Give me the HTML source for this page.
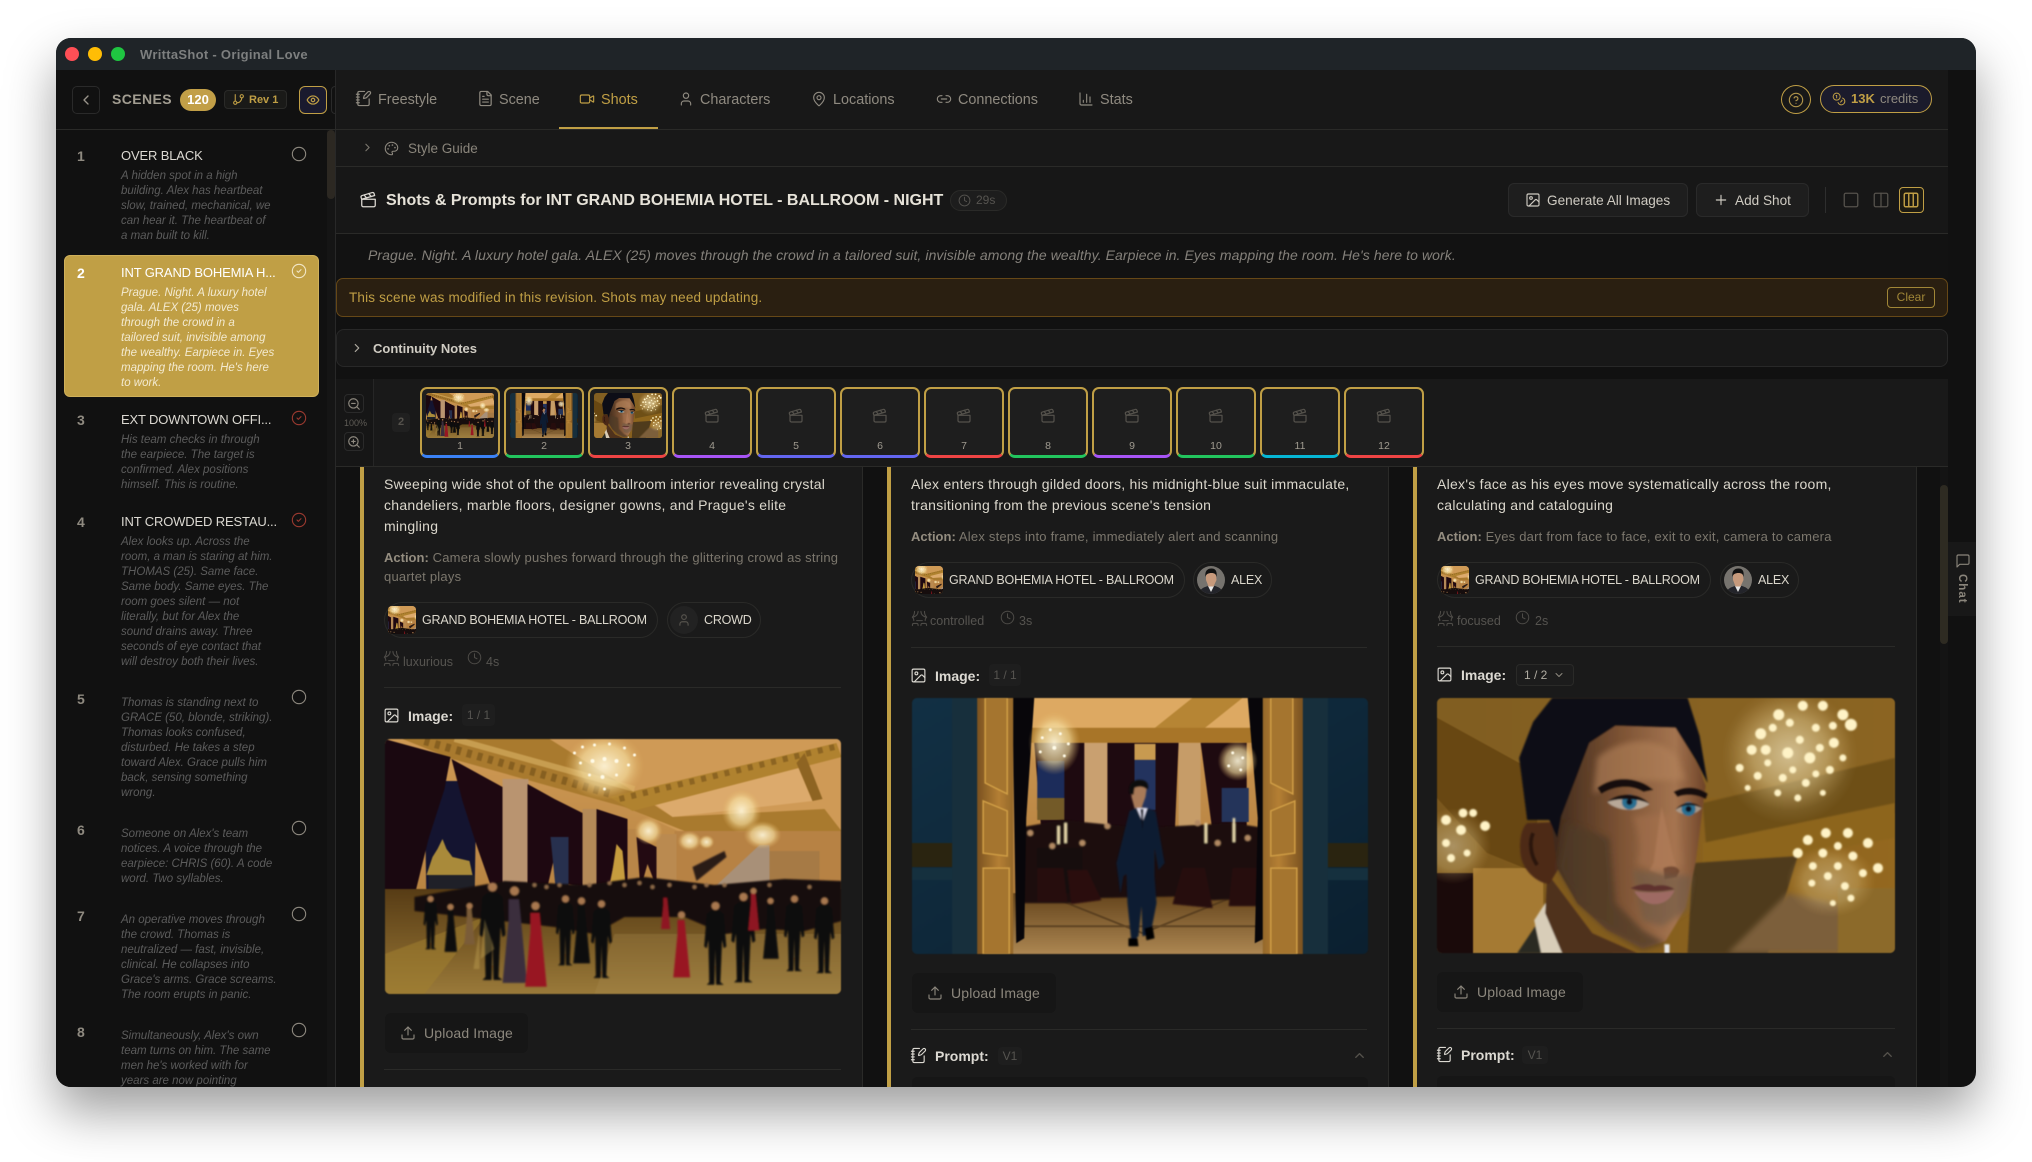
<!DOCTYPE html>
<html lang="en"><head><meta charset="utf-8"><title>WrittaShot - Original Love</title>
<style>
html,body{margin:0;padding:0;width:2032px;height:1162px;background:#fff;overflow:hidden;font-family:"Liberation Sans",Arial,sans-serif}
#win{position:absolute;left:56px;top:38px;width:1920px;height:1049px;border-radius:15px;overflow:hidden;background:#111;box-shadow:0 25px 50px 0 rgba(0,0,0,.38)}
#in{position:absolute;left:-56px;top:-38px;width:2032px;height:1162px}
.b{position:absolute;box-sizing:border-box}
.t{position:absolute;white-space:nowrap}
svg.i{position:absolute;fill:none;stroke:currentColor;stroke-width:2;stroke-linecap:round;stroke-linejoin:round;overflow:visible}
svg.p{position:absolute;display:block}
.tab{font-size:14.4px;line-height:20px;top:90px;color:#8f8a80}
.n{font-size:14px;font-weight:700;line-height:18px;color:#8f8a80;left:77px}
.h{font-size:13px;font-weight:400;line-height:18px;color:#dcd9d2;left:121px;letter-spacing:-.15px;margin-top:1px}
.d{font-size:11.5px;font-style:italic;line-height:15px;color:#5c5c5c;left:121px;margin-top:1px}
.de{font-size:14px;line-height:21px;color:#dbd7cc;letter-spacing:.27px}
.ac{font-size:13px;line-height:19px;color:#7c776d;letter-spacing:.22px}
.ac b{color:#948d80;letter-spacing:0}
.chip{border:1px solid #2a2a28;border-radius:18px;height:36px;background:#1a1a1a}
.ct{font-size:12.5px;line-height:16px;color:#dbd7cc;font-weight:400;letter-spacing:-.2px}
.m{font-size:12.5px;line-height:16px;color:#565450}
.lb{font-size:14px;font-weight:700;line-height:18px;color:#dcd9d2}
.bg{background:#1e1e1e;border-radius:4px;color:#565450;font-size:12px;line-height:22px;text-align:center}
.up{background:#161616;border-radius:6px;height:40px}
.ut{font-size:14px;line-height:18px;color:#8c877d;letter-spacing:.15px}
.hr{height:1px;background:#2a2a28}
.card{left:0;top:387px;width:80px;height:71px;border:2px solid #c09f45;border-bottom-width:3px;border-radius:7px;background:#1e1e1e}
.cn{font-size:10.5px;line-height:12px;color:#a09b90;font-weight:400;text-align:center;width:80px;top:440px}
.btn{background:#1e1e1e;border:1px solid #2a2a2a;border-radius:6px}
.bt{font-size:13.6px;line-height:18px;color:#cfcbc2}
.gold{color:#c09f45}
.ph{filter:blur(.45px)}
</style></head><body>
<svg width="0" height="0" style="position:absolute">
<defs>
<linearGradient id="gFloor" x1="0" y1="0" x2="0" y2="1"><stop offset="0" stop-color="#573c15"/><stop offset=".6" stop-color="#7f6029"/><stop offset="1" stop-color="#9a7a3a"/></linearGradient>
<linearGradient id="gWall" x1="0" y1="0" x2="0" y2="1"><stop offset="0" stop-color="#cf9a55"/><stop offset="1" stop-color="#a97535"/></linearGradient>
<linearGradient id="gDoor" x1="0" y1="0" x2="1" y2="0"><stop offset="0" stop-color="#7a5220"/><stop offset=".6" stop-color="#b47f34"/><stop offset="1" stop-color="#94682a"/></linearGradient>
<linearGradient id="gBlue" x1="0" y1="0" x2="1" y2="1"><stop offset="0" stop-color="#123044"/><stop offset="1" stop-color="#0b2030"/></linearGradient>
<linearGradient id="gFloorB" x1="0" y1="0" x2="0" y2="1"><stop offset="0" stop-color="#63431b"/><stop offset="1" stop-color="#ad8752"/></linearGradient>
<linearGradient id="gFace" x1="0" y1="0" x2="1" y2="0"><stop offset="0" stop-color="#3f2a1c"/><stop offset=".45" stop-color="#7d5334"/><stop offset=".8" stop-color="#a47450"/><stop offset="1" stop-color="#6e4327"/></linearGradient>
<linearGradient id="gBgC" x1="0" y1="0" x2="1" y2="0"><stop offset="0" stop-color="#7a571d"/><stop offset="1" stop-color="#94681f"/></linearGradient>
<radialGradient id="gl"><stop offset="0" stop-color="#fff8dc" stop-opacity=".9"/><stop offset=".6" stop-color="#f6dfa0" stop-opacity=".65"/><stop offset="1" stop-color="#e0b060" stop-opacity="0"/></radialGradient>
<radialGradient id="gs"><stop offset="0" stop-color="#fff4c8" stop-opacity=".4"/><stop offset="1" stop-color="#fff4c8" stop-opacity="0"/></radialGradient>
<filter id="b1" x="-10%" y="-10%" width="120%" height="120%"><feGaussianBlur stdDeviation=".8"/></filter>
<filter id="b2" x="-30%" y="-30%" width="160%" height="160%"><feGaussianBlur stdDeviation="3"/></filter>
<path id="pm" d="M10 8h10l5 4 3 38-3 2-2-10-2 50 4 3h-9l-1-42-1 42h-9l3-3L7 42 5 52l-3-2 3-38Z"/>
<path id="pd" d="M10 10h10l2 20 6 62H4l6-62Z"/>
</defs>

<symbol id="ic-back" viewBox="0 0 24 24"><path d="M15 18l-6-6 6-6"/></symbol>
<symbol id="ic-right" viewBox="0 0 24 24"><path d="m9 18 6-6-6-6"/></symbol>
<symbol id="ic-up" viewBox="0 0 24 24"><path d="m18 15-6-6-6 6"/></symbol>
<symbol id="ic-down" viewBox="0 0 24 24"><path d="m6 9 6 6 6-6"/></symbol>
<symbol id="ic-eye" viewBox="0 0 24 24"><path d="M2 12s3-7 10-7 10 7 10 7-3 7-10 7-10-7-10-7Z"/><circle cx="12" cy="12" r="3"/></symbol>
<symbol id="ic-branch" viewBox="0 0 24 24"><path d="M6 3v12"/><circle cx="18" cy="6" r="3"/><circle cx="6" cy="18" r="3"/><path d="M18 9a9 9 0 0 1-9 9"/></symbol>
<symbol id="ic-note" viewBox="0 0 24 24"><path d="M13.4 2H6a2 2 0 0 0-2 2v16a2 2 0 0 0 2 2h12a2 2 0 0 0 2-2v-7.4"/><path d="M2 6h4M2 10h4M2 14h4M2 18h4"/><path d="M21.378 5.626a1 1 0 1 0-3.004-3.004l-5.01 5.012a2 2 0 0 0-.506.854l-.837 2.87a.5.5 0 0 0 .62.62l2.87-.837a2 2 0 0 0 .854-.506z"/></symbol>
<symbol id="ic-file" viewBox="0 0 24 24"><path d="M15 2H6a2 2 0 0 0-2 2v16a2 2 0 0 0 2 2h12a2 2 0 0 0 2-2V7Z"/><path d="M14 2v4a2 2 0 0 0 2 2h4"/><path d="M10 9H8M16 13H8M16 17H8"/></symbol>
<symbol id="ic-video" viewBox="0 0 24 24"><path d="m16 13 5.223 3.482a.5.5 0 0 0 .777-.416V7.870a.5.5 0 0 0-.752-.432L16 10.500"/><rect x="2" y="6" width="14" height="12" rx="2"/></symbol>
<symbol id="ic-user" viewBox="0 0 24 24"><path d="M19 21v-2a4 4 0 0 0-4-4H9a4 4 0 0 0-4 4v2"/><circle cx="12" cy="7" r="4"/></symbol>
<symbol id="ic-pin" viewBox="0 0 24 24"><path d="M20 10c0 4.993-5.539 10.193-7.399 11.799a1 1 0 0 1-1.202 0C9.539 20.193 4 14.993 4 10a8 8 0 0 1 16 0"/><circle cx="12" cy="10" r="3"/></symbol>
<symbol id="ic-link" viewBox="0 0 24 24"><path d="M9 17H7A5 5 0 0 1 7 7h2"/><path d="M15 7h2a5 5 0 1 1 0 10h-2"/><path d="M8 12h8"/></symbol>
<symbol id="ic-chart" viewBox="0 0 24 24"><path d="M3 3v16a2 2 0 0 0 2 2h16"/><path d="M18 17V9M13 17V5M8 17v-3"/></symbol>
<symbol id="ic-help" viewBox="0 0 24 24"><circle cx="12" cy="12" r="10"/><path d="M9.090 9a3 3 0 0 1 5.830 1c0 2-3 3-3 3"/><path d="M12 17h.01"/></symbol>
<symbol id="ic-coins" viewBox="0 0 24 24"><circle cx="8" cy="8" r="6"/><path d="M18.090 10.370A6 6 0 1 1 10.340 18"/><path d="M7 6h1v4"/><path d="m16.710 13.880.7.710-2.820 2.820"/></symbol>
<symbol id="ic-palette" viewBox="0 0 24 24"><circle cx="13.5" cy="6.5" r=".5"/><circle cx="17.5" cy="10.5" r=".5"/><circle cx="8.5" cy="7.5" r=".5"/><circle cx="6.5" cy="12.5" r=".5"/><path d="M12 2C6.5 2 2 6.5 2 12s4.500 10 10 10c.926 0 1.648-.746 1.648-1.688 0-.437-.18-.835-.437-1.125-.29-.289-.438-.652-.438-1.125a1.640 1.640 0 0 1 1.668-1.668h1.996c3.051 0 5.555-2.503 5.555-5.554C21.965 6.012 17.461 2 12 2z"/></symbol>
<symbol id="ic-clap" viewBox="0 0 24 24"><path d="M20.2 6 3 11l-.9-2.4c-.3-1.1.3-2.2 1.3-2.5l13.5-4c1.1-.3 2.2.3 2.5 1.3Z"/><path d="m6.200 5.300 3.100 3.900"/><path d="m12.400 3.400 3.100 4"/><path d="M3 11h18v8a2 2 0 0 1-2 2H5a2 2 0 0 1-2-2Z"/></symbol>
<symbol id="ic-clock" viewBox="0 0 24 24"><circle cx="12" cy="12" r="10"/><path d="M12 6v6l4 2"/></symbol>
<symbol id="ic-image" viewBox="0 0 24 24"><rect x="3" y="3" width="18" height="18" rx="2"/><circle cx="9" cy="9" r="2"/><path d="m21 15-3.086-3.086a2 2 0 0 0-2.828 0L6 21"/></symbol>
<symbol id="ic-plus" viewBox="0 0 24 24"><path d="M5 12h14M12 5v14"/></symbol>
<symbol id="ic-mood" viewBox="0 0 24 24"><path d="M2 10s3-3 3-8"/><path d="M22 10s-3-3-3-8"/><path d="M10 2c0 4.400-3.600 8-8 8"/><path d="M14 2c0 4.400 3.600 8 8 8"/><path d="M2 10s2 2 2 5"/><path d="M22 10s-2 2-2 5"/><path d="M8 15h8"/><path d="M2 22v-1a2 2 0 0 1 2-2h4a2 2 0 0 1 2 2v1"/><path d="M14 22v-1a2 2 0 0 1 2-2h4a2 2 0 0 1 2 2v1"/></symbol>
<symbol id="ic-upload" viewBox="0 0 24 24"><path d="M21 15v4a2 2 0 0 1-2 2H5a2 2 0 0 1-2-2v-4"/><path d="M17 8l-5-5-5 5"/><path d="M12 3v12"/></symbol>
<symbol id="ic-circle" viewBox="0 0 24 24"><circle cx="12" cy="12" r="10"/></symbol>
<symbol id="ic-check" viewBox="0 0 24 24"><circle cx="12" cy="12" r="10"/><path d="m9 12 2 2 4-4"/></symbol>
<symbol id="ic-msg" viewBox="0 0 24 24"><path d="M21 15a2 2 0 0 1-2 2H7l-4 4V5a2 2 0 0 1 2-2h14a2 2 0 0 1 2 2z"/></symbol>
<symbol id="ic-sq" viewBox="0 0 24 24"><rect x="3" y="3" width="18" height="18" rx="2"/></symbol>
<symbol id="ic-c2" viewBox="0 0 24 24"><rect x="3" y="3" width="18" height="18" rx="2"/><path d="M12 3v18"/></symbol>
<symbol id="ic-c3" viewBox="0 0 24 24"><rect x="3" y="3" width="18" height="18" rx="2"/><path d="M9 3v18M15 3v18"/></symbol>
<symbol id="ic-zo" viewBox="0 0 24 24"><circle cx="11" cy="11" r="8"/><path d="m21 21-4.300-4.300"/><path d="M8 11h6"/></symbol>
<symbol id="ic-zi" viewBox="0 0 24 24"><circle cx="11" cy="11" r="8"/><path d="m21 21-4.300-4.300"/><path d="M11 8v6M8 11h6"/></symbol>

<!-- Ballroom -->
<symbol id="sA" viewBox="0 0 457 255" preserveAspectRatio="xMidYMid slice">
<rect width="457" height="255" fill="url(#gWall)"/>
<path d="M165 0H457V95H300L225 60Z" fill="#cf9a56"/>
<path d="M265 61 412 24 428 62 288 78Z" fill="#dcaa6c"/>
<path d="M18 0H165L245 50 288 78 440 70 457 92H300L240 68 68 20Z" fill="#a97a2e"/>
<path d="M225 58 452 4 457 18 248 72Z" fill="#b0822f"/>
<path d="M40 2 230 56" stroke="#6f4d18" stroke-width="8" stroke-dasharray="5 6" opacity=".6" fill="none"/>
<path d="M235 60 450 8" stroke="#6f4d18" stroke-width="6" stroke-dasharray="5 7" opacity=".55" fill="none"/>
<path d="M70 0 250 50" stroke="#dcb468" stroke-width="6" opacity=".6" fill="none"/>
<path d="M412 24 428 62 438 60 420 14Z" fill="#8e6422"/>
<rect y="92" x="290" width="167" height="60" fill="#b78244"/>
<path d="M328 150 375 106 385 106V150Z" fill="#a89078"/>
<rect x="385" y="112" width="50" height="40" fill="#a67a45"/>
<rect x="118" y="40" width="26" height="110" fill="#b99470"/>
<rect x="198" y="70" width="14" height="85" fill="#b48a58"/>
<rect x="243" y="90" width="10" height="65" fill="#b98648"/>
<rect x="272" y="95" width="20" height="60" fill="#ba8a50"/>
<path d="M40 42H92L90 165H42Z" fill="#141430"/>
<path d="M48 118 53 110 58 100 62 110 68 118 85 122 88 136H42Z" fill="#a98a3a"/>
<path d="M44 136H90V165H44Z" fill="#1f2028"/>
<path d="M0 0 66 18 60 50 44 100 28 165 20 205 0 208Z" fill="#1a0810"/>
<path d="M67 20 118 48 118 152 106 146 92 106 78 62Z" fill="#1e0811"/>
<path d="M143 45 170 60 198 74 198 148 184 145 174 100 162 152 143 148Z" fill="#1e0811"/>
<path d="M166 98H184V148H171Z" fill="#27304e"/>
<path d="M212 70 243 80 243 150 232 112 224 150 212 148Z" fill="#1e0811"/>
<path d="M252 98 272 108 272 148 263 125 256 150Z" fill="#230a12"/>
<path d="M232 105 238 112 241 145H226Z" fill="#c69c3e"/>
<rect x="0" y="150" width="457" height="105" fill="url(#gFloor)"/>
<path d="M0 215 100 178 40 255H0Z" fill="#a07f30" opacity=".55"/>
<path d="M230 195H457V255H210Z" fill="#a88a50" opacity=".3"/>
<g filter="url(#b1)">
<path d="M30 158 120 142 200 146 260 138 330 146 400 140 457 142V182L420 192 380 190 340 195 300 178 240 178 210 195 170 188 30 172Z" fill="#140b08"/>
<g fill="#0c0a0a">
<use href="#pm" transform="translate(38 158) scale(.55)"/>
<use href="#pd" transform="translate(58 165) scale(.52)"/>
<use href="#pm" transform="translate(93 146) scale(1)"/>
<use href="#pm" transform="translate(170 158) scale(.72)"/>
<use href="#pd" transform="translate(186 160) scale(.7)"/>
<use href="#pm" transform="translate(205 163) scale(.8)"/>
<use href="#pm" transform="translate(318 165) scale(.85)"/>
<use href="#pm" transform="translate(345 156) scale(.92)"/>
<use href="#pd" transform="translate(376 160) scale(.65)"/>
<use href="#pm" transform="translate(398 158) scale(.78)"/>
<use href="#pm" transform="translate(428 160) scale(.78)"/>
</g>
<use href="#pd" fill="#7a5c38" transform="translate(78 165) scale(.44)"/>
<use href="#pd" fill="#3a2e3c" transform="translate(114 150) scale(1.02)"/>
<use href="#pd" fill="#981422" transform="translate(137 165) scale(.9)"/>
<use href="#pd" fill="#981422" transform="translate(286 174) scale(.7)"/>
<use href="#pd" fill="#8e1520" transform="translate(362 150) scale(.45)"/>
<use href="#pd" fill="#8e1520" transform="translate(275 155) scale(.38)"/>
<g fill="#a87850">
<circle cx="46" cy="160" r="3"/><circle cx="66" cy="168" r="3"/><circle cx="85" cy="167" r="3"/><circle cx="108" cy="148" r="4.500"/><circle cx="130" cy="152" r="4.500"/><circle cx="151" cy="167" r="4"/><circle cx="181" cy="160" r="3.500"/><circle cx="197" cy="162" r="3.500"/><circle cx="217" cy="165" r="3.500"/><circle cx="297" cy="176" r="3.500"/><circle cx="331" cy="167" r="4"/><circle cx="359" cy="158" r="4"/><circle cx="369" cy="152" r="3"/><circle cx="386" cy="162" r="3"/><circle cx="410" cy="160" r="3.500"/><circle cx="440" cy="162" r="3.500"/>
</g>
<g fill="#8e6a48"><circle cx="150" cy="146" r="2"/><circle cx="162" cy="148" r="2"/><circle cx="175" cy="146" r="2"/><circle cx="205" cy="146" r="2"/><circle cx="225" cy="144" r="2"/><circle cx="240" cy="146" r="2"/><circle cx="255" cy="144" r="2"/><circle cx="268" cy="148" r="2"/><circle cx="285" cy="146" r="2"/><circle cx="310" cy="148" r="2"/><circle cx="322" cy="146" r="2"/><circle cx="340" cy="146" r="2"/><circle cx="385" cy="146" r="2"/><circle cx="425" cy="148" r="2"/></g>
<path d="M308 128 340 112 342 118 312 142Z" fill="#2a1a14"/>
</g>
<ellipse cx="220" cy="27" rx="40" ry="34" fill="url(#gl)"/>
<g fill="#fffbe8">
<circle cx="190" cy="14" r="1.500"/><circle cx="198" cy="8" r="1.500"/><circle cx="210" cy="6" r="1.500"/><circle cx="225" cy="5" r="1.500"/><circle cx="240" cy="9" r="1.500"/><circle cx="250" cy="16" r="1.500"/><circle cx="196" cy="24" r="1.500"/><circle cx="208" cy="22" r="2"/><circle cx="220" cy="20" r="2"/><circle cx="232" cy="22" r="2"/><circle cx="244" cy="26" r="1.500"/><circle cx="205" cy="36" r="1.500"/><circle cx="218" cy="38" r="2"/><circle cx="232" cy="36" r="1.500"/><circle cx="220" cy="50" r="1.500"/></g>
<ellipse cx="264" cy="92" rx="14" ry="14" fill="url(#gl)"/>
<ellipse cx="357" cy="72" rx="20" ry="22" fill="url(#gl)"/>
<ellipse cx="378" cy="96" rx="19" ry="14" fill="url(#gl)"/>
<ellipse cx="305" cy="102" rx="12" ry="10" fill="url(#gl)"/>
<ellipse cx="322" cy="103" rx="8" ry="7" fill="url(#gl)"/>
<path d="M100 180l10 30-14 10ZM95 190l-6 40h6Z" fill="#d8ba62" opacity=".3" filter="url(#b1)"/>
</symbol>

<!-- Doors -->
<symbol id="sB" viewBox="0 0 455 256" preserveAspectRatio="xMidYMid slice">
<rect width="455" height="256" fill="url(#gBlue)"/>
<rect x="0" y="145" width="50" height="24" fill="#2a2410"/>
<rect x="405" y="145" width="50" height="24" fill="#2a2410"/>
<rect x="0" y="170" width="50" height="12" fill="#15303e"/>
<rect x="405" y="170" width="50" height="12" fill="#15303e"/>
<rect x="40" y="0" width="25" height="256" fill="#172f3c"/>
<rect x="390" y="0" width="25" height="256" fill="#172f3c"/>
<rect x="100" y="0" width="255" height="256" fill="url(#gWall)"/>
<rect x="100" y="0" width="255" height="32" fill="#dda962"/>
<path d="M240 32 280 0H330L290 32Z" fill="#b68534"/>
<rect x="100" y="30" width="255" height="15" fill="#a87528"/>
<path d="M122 45H172L172 135 150 145H130Z" fill="#1e0a10"/>
<path d="M125 63h27v49h-27Z" fill="#1c2c5a"/>
<path d="M125 100h27v22h-27Z" fill="#735a28"/>
<rect x="172" y="45" width="23" height="100" fill="#c9a070"/>
<rect x="266" y="45" width="22" height="100" fill="#c69c68"/>
<path d="M195 45H266L262 140 195 140Z" fill="#1e0a10"/>
<rect x="222" y="62" width="21" height="50" fill="#23335e"/>
<path d="M222 46h21v16h-21Z" fill="#c89a50"/>
<path d="M288 45H334L334 128 300 135Z" fill="#1e0a10"/>
<rect x="309" y="90" width="27" height="34" fill="#24345a"/>
<rect x="100" y="195" width="255" height="61" fill="url(#gFloorB)"/>
<path d="M108 228 350 228M130 195 230 235M330 195 230 235" stroke="#4e361a" stroke-width="2" opacity=".7"/>
<g filter="url(#b1)">
<path d="M105 130 150 122 230 130 320 125 352 130 350 200 300 202 280 198 180 200 160 205 105 205Z" fill="#1a0e0a"/>
<path d="M125 150h45v45h-45Z" fill="#160a0a"/>
<path d="M155 172h20l14 30-30 4Z" fill="#2c0f10"/>
<path d="M125 170h26l4 34h-30Z" fill="#260d10"/>
<path d="M270 170h22l8 40-40-4Z" fill="#260d10"/>
<path d="M320 170h30l-2 38h-32Z" fill="#260d10"/>
<g fill="#b38a64"><circle cx="118" cy="135" r="3"/><circle cx="140" cy="148" r="3"/><circle cx="170" cy="145" r="3"/><circle cx="195" cy="128" r="3"/><circle cx="285" cy="125" r="3"/><circle cx="305" cy="145" r="3"/><circle cx="335" cy="140" r="3"/></g>
<rect x="145" y="128" width="2.500" height="18" fill="#f0e0b0"/><rect x="152" y="125" width="2.500" height="20" fill="#f0e0b0"/><rect x="292" y="125" width="2.500" height="20" fill="#f0e0b0"/><rect x="320" y="120" width="2.500" height="24" fill="#f0e0b0"/>
</g>
<path d="M100 0H122L114 120 112 240 104 245 102 120Z" fill="#08060a"/>
<path d="M335 0H352L352 240 342 245 345 120Z" fill="#08060a"/>
<rect x="65" y="0" width="36" height="256" fill="url(#gDoor)"/>
<rect x="350" y="0" width="40" height="256" fill="url(#gDoor)" transform="matrix(-1 0 0 1 740 0)"/>
<path d="M73 0H95V96L73 85ZM71 103 95 113V158L71 155ZM71 170 97 170V256H71Z" fill="#a5752f" stroke="#cf9d45" stroke-width="1.500"/>
<path d="M358 85 380 96V0H358ZM358 113 382 103V155L358 158ZM358 170H384V256H358Z" fill="#a5752f" stroke="#cf9d45" stroke-width="1.500"/>
<ellipse cx="142" cy="45" rx="26" ry="32" fill="url(#gl)"/>
<ellipse cx="325" cy="63" rx="20" ry="20" fill="url(#gl)"/>
<g fill="#fffbe8"><circle cx="130" cy="40" r="1.500"/><circle cx="138" cy="32" r="1.500"/><circle cx="148" cy="36" r="1.500"/><circle cx="156" cy="46" r="1.500"/><circle cx="128" cy="54" r="1.500"/><circle cx="142" cy="50" r="2"/><circle cx="152" cy="58" r="1.500"/><circle cx="320" cy="55" r="1.500"/><circle cx="330" cy="60" r="1.500"/><circle cx="316" cy="68" r="1.500"/><circle cx="328" cy="72" r="1.500"/></g>
<g filter="url(#b1)">
<path d="M217 113 228 108 243 113 252 165 246 172 242 150 242 178 244 205 238 236 230 238 229 208 226 238 219 244 215 205 214 176 211 178 208 196 204 165Z" fill="#0e1a30"/>
<path d="M224 110h11l-5 14Z" fill="#dde"/>
<path d="M228 111h3l-1 22Z" fill="#0a0a14"/>
<path d="M219 90c3-5 14-5 15 2l-1 7-4 11h-7l-3-11Z" fill="#a87a58"/>
<path d="M217 96c-2-10 4-14 10-14 7 0 10 4 8 10-4-4-9-4-13-2l-1 7Z" fill="#0b0a0c"/>
<path d="M216 240h9l1 8h-10ZM232 230l8-2 2 12-8 2Z" fill="#050506"/>
</g>
</symbol>

<!-- Face -->
<symbol id="sC" viewBox="0 0 457 255" preserveAspectRatio="xMidYMid slice">
<rect width="457" height="255" fill="url(#gBgC)"/>
<rect x="0" y="0" width="457" height="100" fill="#856325" opacity=".6"/>
<path d="M0 20 100 75 100 175 50 155 0 100Z" fill="#684712"/>
<path d="M265 105 457 60V115L270 165Z" fill="#6e4f14" filter="url(#b1)"/>
<path d="M265 145 457 105V140L265 175Z" fill="#8d651e" filter="url(#b1)"/>
<path d="M255 165 360 158 330 255H250Z" fill="#4f3b1e" filter="url(#b1)"/>
<path d="M290 255 350 195 420 210 457 255Z" fill="#7b5f3a" filter="url(#b2)"/>
<rect x="0" y="175" width="36" height="80" fill="#1a0a0a"/>
<rect x="36" y="170" width="70" height="85" fill="#a57a33"/>
<rect x="400" y="190" width="57" height="65" fill="#8c6a2a" filter="url(#b1)"/>
<circle cx="352" cy="58" r="68" fill="url(#gs)"/>
<ellipse cx="352" cy="55" rx="62" ry="58" fill="url(#gl)" opacity=".4"/>
<g fill="#fff3c6" filter="url(#b1)">
<circle cx="323" cy="36" r="5.500"/><circle cx="341" cy="17" r="5.500"/><circle cx="365" cy="8" r="5"/><circle cx="385" cy="8" r="5"/><circle cx="405" cy="17" r="5.500"/><circle cx="413" cy="27" r="6"/><circle cx="314" cy="52" r="5"/><circle cx="328" cy="52" r="5"/><circle cx="350" cy="55" r="5.500"/><circle cx="372" cy="60" r="5.500"/><circle cx="396" cy="45" r="5"/><circle cx="345" cy="80" r="4"/><circle cx="368" cy="85" r="4"/><circle cx="392" cy="72" r="4"/><circle cx="320" cy="78" r="4"/><circle cx="340" cy="95" r="3.500"/><circle cx="360" cy="100" r="3.500"/><circle cx="302" cy="70" r="4"/><circle cx="335" cy="30" r="4"/><circle cx="352" cy="25" r="4"/><circle cx="378" cy="30" r="4"/><circle cx="395" cy="28" r="4"/><circle cx="362" cy="42" r="4"/><circle cx="382" cy="50" r="4"/><circle cx="405" cy="60" r="3.500"/><circle cx="330" cy="65" r="3.500"/><circle cx="355" cy="72" r="3.500"/><circle cx="378" cy="76" r="3.500"/><circle cx="310" cy="90" r="3"/><circle cx="385" cy="95" r="3"/>
</g>
<ellipse cx="393" cy="183" rx="45" ry="36" fill="url(#gl)" opacity=".4"/>
<g fill="#fff3c6" filter="url(#b1)">
<circle cx="370" cy="142" r="5"/><circle cx="388" cy="135" r="5"/><circle cx="410" cy="135" r="5"/><circle cx="430" cy="145" r="5"/><circle cx="360" cy="155" r="5"/><circle cx="385" cy="155" r="4.500"/><circle cx="415" cy="158" r="4.500"/><circle cx="440" cy="170" r="5"/><circle cx="390" cy="178" r="4"/><circle cx="407" cy="188" r="4"/><circle cx="374" cy="185" r="3.500"/><circle cx="413" cy="200" r="3.500"/><circle cx="375" cy="168" r="4"/><circle cx="400" cy="148" r="4"/><circle cx="425" cy="175" r="4"/><circle cx="400" cy="168" r="4"/><circle cx="395" cy="205" r="3"/>
</g>
<ellipse cx="16" cy="148" rx="38" ry="38" fill="url(#gl)" opacity=".4"/>
<g fill="#fff3c6" filter="url(#b1)">
<circle cx="9" cy="122" r="5"/><circle cx="26" cy="115" r="4.500"/><circle cx="9" cy="145" r="4"/><circle cx="24" cy="132" r="5"/><circle cx="36" cy="115" r="4"/><circle cx="48" cy="128" r="5"/><circle cx="14" cy="160" r="4"/><circle cx="30" cy="155" r="3.500"/>
</g>
<g filter="url(#b1)">
<path d="M80 255 100 225 118 208 175 255Z" fill="#2b2a20"/>
<path d="M97 222 108 205 125 255H104Z" fill="#d8cdb8"/>
<path d="M110 175 155 235 200 255H125L108 215Z" fill="#50301c"/>
<path d="M90 125c-6 5-9 20-6 35 3 12 14 24 28 26l12-20-6-42Z" fill="#4e2b19"/>
<path d="M96 135c-4 8-3 22 4 32" stroke="#2a140c" stroke-width="4" fill="none"/>
<path d="M148 38 176 28 238 28 262 70 268 88 262 135 258 165 248 210 228 243 205 250 170 232 140 205 120 170 115 130 130 80Z" fill="url(#gFace)"/>
<path d="M160 60c25-22 65-22 80 0l8 22-70 2-22 12Z" fill="#b3825a" opacity=".6" filter="url(#b2)"/>
<path d="M195 118c8 20 8 35 4 48l22 8 24-8-8-50Z" fill="#a87350" opacity=".5" filter="url(#b2)"/>
<path d="M224 108 236 160 240 172 226 178 212 172 216 165Z" fill="#b07c58" opacity=".75" filter="url(#b1)"/>
<path d="M226 170c8-3 14-2 16 3l-3 6-12 2Z" fill="#5f3926" opacity=".7"/>
<path d="M130 125 172 140 178 205 205 232 228 245 205 252 170 232 140 205 120 170Z" fill="#4f3a28" opacity=".75" filter="url(#b2)"/>
<path d="M195 172 255 178 250 212 225 228 205 222Z" fill="#6e5a46" opacity=".6" filter="url(#b2)"/>
<path d="M115 0 250 0 262 38 270 85 258 62 238 30 178 28 152 45 138 82 124 118 120 140 112 122 90 122 82 60 96 24Z" fill="#0e0e12"/>
<path d="M160 90c15-12 40-12 56 2l-10 2c-12-8-30-6-42 2Z" fill="#15100e"/>
<path d="M236 94c10-6 24-6 34 2l-2 5c-10-5-20-5-28-2Z" fill="#15100e"/>
<path d="M170 104c10-8 30-8 42 2-10 8-32 8-42-2Z" fill="#b8a898"/>
<path d="M238 112c6-8 20-8 26-2-6 8-20 8-26 2Z" fill="#a89888"/>
<circle cx="192" cy="104" r="7.500" fill="#2a6f92"/><circle cx="192" cy="104" r="3" fill="#07101a"/>
<circle cx="251" cy="111" r="7" fill="#2a6f92"/><circle cx="251" cy="111" r="3" fill="#07101a"/>
<path d="M170 104c10-10 32-10 42 2-10-6-32-6-42-2ZM238 112c6-9 20-9 26-2-8-4-18-4-26 2Z" fill="#120c0a"/>
<path d="M193 190c10-5 20-5 24-2 6-2 14-1 20 3-14 3-34 3-44-1Z" fill="#5f332d"/>
<path d="M197 193c12 2 28 2 40-1-4 10-12 14-20 14-8 0-16-5-20-13Z" fill="#9e6a64"/>
<rect x="227" y="246" width="5" height="9" fill="#e8e8e8"/>
</g>
</symbol>

<symbol id="sAlex" viewBox="0 0 28 28" preserveAspectRatio="xMidYMid slice">
<rect width="28" height="28" fill="#76736e"/>
<path d="M2 28c1-6 6-7 9-8h7c3 1 7 2 8 8Z" fill="#23242a"/>
<path d="M11 20 14 26 17 20Z" fill="#e6e6e6"/>
<path d="M9 8c0-3 10-3 10 0l.5 6-3 6.500h-5L9 14Z" fill="#c79a7c"/>
<path d="M8.500 11c-1-7 3-8.500 6-8.500s6 1.500 5 8.500c-.5-3-2-4-5-4s-5.500 1-6 4Z" fill="#111"/>
</symbol>
</svg>

<div id="win"><div id="in">

<!-- title bar -->
<div class="b" style="left:56px;top:38px;width:1920px;height:32px;background:#1f2428"></div>
<div class="b" style="left:65px;top:47px;width:14px;height:14px;border-radius:50%;background:#ff4f56"></div>
<div class="b" style="left:88px;top:47px;width:14px;height:14px;border-radius:50%;background:#ffbd05"></div>
<div class="b" style="left:111px;top:47px;width:14px;height:14px;border-radius:50%;background:#1fc541"></div>
<div class="t" style="left:140px;top:47px;font-size:13px;line-height:16px;font-weight:700;color:#7d7f7f;letter-spacing:.3px">WrittaShot - Original Love</div>

<!-- sidebar base -->
<div class="b" style="left:56px;top:70px;width:279px;height:1017px;background:#111"></div>
<div class="b" style="left:327px;top:130px;width:8px;height:957px;background:#151515"></div>
<div class="b" style="left:327px;top:130px;width:8px;height:69px;background:#2c2822;border-radius:4px"></div>
<div class="b" style="left:335px;top:70px;width:1px;height:1017px;background:#282828"></div>

<!-- top bar -->
<div class="b" style="left:336px;top:70px;width:1612px;height:59px;background:#181818"></div>
<div class="b" style="left:56px;top:129px;width:1892px;height:1px;background:#2a2a28"></div>

<div class="b" style="left:72px;top:86px;width:28px;height:28px;border:1px solid #2a2a2a;border-radius:5px"></div>
<svg class="i" style="left:78px;top:92px;width:16px;height:16px;color:#9a958b"><use href="#ic-back"/></svg>
<div class="t" style="left:112px;top:90px;font-size:14px;font-weight:700;line-height:18px;color:#a39e92;letter-spacing:.4px">SCENES</div>
<div class="b" style="left:180px;top:89px;width:36px;height:22px;border-radius:11px;background:#c29f47;color:#fff;font-size:13px;font-weight:700;line-height:22px;text-align:center">120</div>
<div class="b" style="left:224px;top:90px;width:63px;height:19px;border:1px solid #2a2a28;border-radius:4px;background:#1a1a18"></div>
<svg class="i gold" style="left:232px;top:93px;width:13px;height:13px"><use href="#ic-branch"/></svg>
<div class="t gold" style="left:249px;top:93px;font-size:11px;font-weight:700;line-height:15px">Rev 1</div>
<div class="b" style="left:299px;top:86px;width:28px;height:28px;border:1px solid #c09f45;border-radius:6px;background:#1a1a2e"></div>
<svg class="i gold" style="left:306px;top:93px;width:14px;height:14px"><use href="#ic-eye"/></svg>
<div class="b" style="left:331px;top:86px;width:4px;height:28px;border:1px solid #2a2a2a;border-right:0;border-radius:5px 0 0 5px"></div>

<!-- tabs -->
<svg class="i" style="left:355px;top:90px;width:17px;height:17px;color:#8f8a80;stroke-width:1.7"><use href="#ic-note"/></svg>
<div class="t tab" style="left:378px">Freestyle</div>
<svg class="i" style="left:477px;top:90px;width:17px;height:17px;color:#8f8a80;stroke-width:1.7"><use href="#ic-file"/></svg>
<div class="t tab" style="left:499px">Scene</div>
<svg class="i gold" style="left:579px;top:91px;width:16px;height:16px;stroke-width:1.7"><use href="#ic-video"/></svg>
<div class="t tab gold" style="left:601px">Shots</div>
<div class="b" style="left:559px;top:127px;width:99px;height:2px;background:#c09f45"></div>
<svg class="i" style="left:678px;top:91px;width:16px;height:16px;color:#8f8a80;stroke-width:1.7"><use href="#ic-user"/></svg>
<div class="t tab" style="left:700px">Characters</div>
<svg class="i" style="left:811px;top:91px;width:16px;height:16px;color:#8f8a80;stroke-width:1.7"><use href="#ic-pin"/></svg>
<div class="t tab" style="left:833px">Locations</div>
<svg class="i" style="left:936px;top:91px;width:16px;height:16px;color:#8f8a80;stroke-width:1.7"><use href="#ic-link"/></svg>
<div class="t tab" style="left:958px">Connections</div>
<svg class="i" style="left:1078px;top:91px;width:16px;height:16px;color:#8f8a80;stroke-width:1.7"><use href="#ic-chart"/></svg>
<div class="t tab" style="left:1100px">Stats</div>

<div class="b" style="left:1781px;top:85px;width:30px;height:29px;border:1px solid #c09f45;border-radius:50%;background:#181818"></div>
<svg class="i" style="left:1788px;top:92px;width:16px;height:16px;color:#b0944a;stroke-width:1.7"><use href="#ic-help"/></svg>
<div class="b" style="left:1820px;top:85px;width:112px;height:28px;border:1px solid #c09f45;border-radius:14px;background:#1b1b2c"></div>
<svg class="i gold" style="left:1832px;top:92px;width:14px;height:14px;stroke-width:1.7"><use href="#ic-coins"/></svg>
<div class="t gold" style="left:1851px;top:91px;font-size:13px;font-weight:700;line-height:16px">13K</div>
<div class="t" style="left:1880px;top:91px;font-size:13px;line-height:16px;color:#8f8a80">credits</div>

<!-- style guide -->
<div class="b" style="left:336px;top:130px;width:1612px;height:37px;background:#181818;border-bottom:1px solid #2a2a28"></div>
<svg class="i" style="left:361px;top:141px;width:13px;height:13px;color:#7d7970"><use href="#ic-right"/></svg>
<svg class="i" style="left:384px;top:141px;width:15px;height:15px;color:#8f8a80;stroke-width:1.7"><use href="#ic-palette"/></svg>
<div class="t" style="left:408px;top:141px;font-size:13.5px;line-height:16px;color:#8a857b">Style Guide</div>

<!-- title row -->
<div class="b" style="left:336px;top:167px;width:1612px;height:67px;background:#171717;border-bottom:1px solid #2a2a28"></div>
<svg class="i" style="left:359px;top:191px;width:19px;height:18px;color:#dcd9d2;stroke-width:1.7"><use href="#ic-clap"/></svg>
<div class="t" style="left:386px;top:191px;font-size:16px;font-weight:700;line-height:20px;color:#e6e2d8">Shots &amp; Prompts for INT GRAND BOHEMIA HOTEL - BALLROOM - NIGHT</div>
<div class="b" style="left:950px;top:190px;width:57px;height:21px;border:1px solid #2a2a28;border-radius:11px;background:#1d1d1d"></div>
<svg class="i" style="left:958px;top:194px;width:13px;height:13px;color:#565450;stroke-width:1.7"><use href="#ic-clock"/></svg>
<div class="t" style="left:976px;top:193px;font-size:12px;line-height:15px;color:#565450">29s</div>

<div class="b btn" style="left:1508px;top:183px;width:180px;height:34px"></div>
<svg class="i" style="left:1525px;top:192px;width:16px;height:16px;color:#cfcbc2;stroke-width:1.7"><use href="#ic-image"/></svg>
<div class="t bt" style="left:1547px;top:192px">Generate All Images</div>
<div class="b btn" style="left:1696px;top:183px;width:113px;height:34px"></div>
<svg class="i" style="left:1713px;top:192px;width:16px;height:16px;color:#cfcbc2;stroke-width:1.7"><use href="#ic-plus"/></svg>
<div class="t bt" style="left:1735px;top:192px">Add Shot</div>
<div class="b" style="left:1825px;top:187px;width:1px;height:26px;background:#2e2e2e"></div>
<svg class="i" style="left:1842px;top:191px;width:18px;height:18px;color:#55524c;stroke-width:1.7"><use href="#ic-sq"/></svg>
<svg class="i" style="left:1872px;top:191px;width:18px;height:18px;color:#55524c;stroke-width:1.7"><use href="#ic-c2"/></svg>
<div class="b" style="left:1899px;top:187px;width:25px;height:26px;border:1px solid #c09f45;border-radius:4px;background:#1c1a12"></div>
<svg class="i gold" style="left:1902px;top:191px;width:18px;height:18px;stroke-width:1.9"><use href="#ic-c3"/></svg>

<!-- desc -->
<div class="b" style="left:336px;top:234px;width:1612px;height:44px;background:#121212"></div>
<div class="t" style="left:368px;top:246px;font-size:14px;font-style:italic;line-height:18px;color:#84807a;letter-spacing:.08px">Prague. Night. A luxury hotel gala. ALEX (25) moves through the crowd in a tailored suit, invisible among the wealthy. Earpiece in. Eyes mapping the room. He's here to work.</div>

<!-- banner -->
<div class="b" style="left:336px;top:278px;width:1612px;height:39px;background:#2a1f11;border:1px solid #664817;border-radius:7px"></div>
<div class="t gold" style="left:349px;top:289px;font-size:13.5px;font-weight:400;line-height:17px;letter-spacing:.18px">This scene was modified in this revision. Shots may need updating.</div>
<div class="b" style="left:1887px;top:287px;width:48px;height:21px;border:1px solid #a08637;border-radius:4px;color:#a08637;font-size:12px;line-height:19px;text-align:center">Clear</div>

<!-- continuity -->
<div class="b" style="left:336px;top:329px;width:1612px;height:38px;background:#181818;border:1px solid #282828;border-radius:8px"></div>
<svg class="i" style="left:350px;top:341px;width:14px;height:14px;color:#b0aca2"><use href="#ic-right"/></svg>
<div class="t" style="left:373px;top:341px;font-size:13px;font-weight:700;line-height:16px;color:#d0ccc3">Continuity Notes</div>

<!-- filmstrip -->
<div class="b" style="left:336px;top:379px;width:1612px;height:88px;background:#191919;border-bottom:1px solid #2a2a28"></div>
<div class="b" style="left:336px;top:379px;width:38px;height:87px;background:#161616;border-right:1px solid #262626"></div>
<div class="b" style="left:344px;top:394px;width:20px;height:19px;border:1px solid #2a2a2a;border-radius:4px"></div>
<svg class="i" style="left:347px;top:397px;width:14px;height:14px;color:#8f8a80"><use href="#ic-zo"/></svg>
<div class="t" style="left:344px;width:20px;text-align:center;top:417px;font-size:9px;line-height:12px;color:#5f5c56">100%</div>
<div class="b" style="left:344px;top:432px;width:20px;height:19px;border:1px solid #2a2a2a;border-radius:4px"></div>
<svg class="i" style="left:347px;top:435px;width:14px;height:14px;color:#8f8a80"><use href="#ic-zi"/></svg>
<div class="b" style="left:392px;top:413px;width:18px;height:19px;border-radius:4px;background:#202020;color:#55524c;font-size:11px;font-weight:700;line-height:19px;text-align:center">2</div>

<div class="b card" style="left:420px;border-bottom-color:#3b82f6"></div>
<div class="b card" style="left:504px;border-bottom-color:#22c55e"></div>
<div class="b card" style="left:588px;border-bottom-color:#ef4444"></div>
<div class="b card" style="left:672px;border-bottom-color:#a855f7"></div>
<div class="b card" style="left:756px;border-bottom-color:#6366f1"></div>
<div class="b card" style="left:840px;border-bottom-color:#6366f1"></div>
<div class="b card" style="left:924px;border-bottom-color:#ef4444"></div>
<div class="b card" style="left:1008px;border-bottom-color:#22c55e"></div>
<div class="b card" style="left:1092px;border-bottom-color:#a855f7"></div>
<div class="b card" style="left:1176px;border-bottom-color:#22c55e"></div>
<div class="b card" style="left:1260px;border-bottom-color:#06b6d4"></div>
<div class="b card" style="left:1344px;border-bottom-color:#ef4444"></div>

<svg class="p" style="left:426px;top:393px;border-radius:3px" width="68" height="45" viewBox="0 0 457 255" preserveAspectRatio="xMidYMid slice"><use href="#sA" width="457" height="255"/></svg>
<svg class="p" style="left:510px;top:393px;border-radius:3px" width="68" height="45" viewBox="0 0 455 256" preserveAspectRatio="xMidYMid slice"><use href="#sB" width="455" height="256"/></svg>
<svg class="p" style="left:594px;top:393px;border-radius:3px" width="68" height="45" viewBox="0 0 457 255" preserveAspectRatio="xMidYMid slice"><use href="#sC" width="457" height="255"/></svg>

<svg class="i" style="left:704px;top:408px;width:16px;height:16px;color:#55524c;stroke-width:1.8"><use href="#ic-clap"/></svg>
<svg class="i" style="left:788px;top:408px;width:16px;height:16px;color:#55524c;stroke-width:1.8"><use href="#ic-clap"/></svg>
<svg class="i" style="left:872px;top:408px;width:16px;height:16px;color:#55524c;stroke-width:1.8"><use href="#ic-clap"/></svg>
<svg class="i" style="left:956px;top:408px;width:16px;height:16px;color:#55524c;stroke-width:1.8"><use href="#ic-clap"/></svg>
<svg class="i" style="left:1040px;top:408px;width:16px;height:16px;color:#55524c;stroke-width:1.8"><use href="#ic-clap"/></svg>
<svg class="i" style="left:1124px;top:408px;width:16px;height:16px;color:#55524c;stroke-width:1.8"><use href="#ic-clap"/></svg>
<svg class="i" style="left:1208px;top:408px;width:16px;height:16px;color:#55524c;stroke-width:1.8"><use href="#ic-clap"/></svg>
<svg class="i" style="left:1292px;top:408px;width:16px;height:16px;color:#55524c;stroke-width:1.8"><use href="#ic-clap"/></svg>
<svg class="i" style="left:1376px;top:408px;width:16px;height:16px;color:#55524c;stroke-width:1.8"><use href="#ic-clap"/></svg>

<div class="t cn" style="left:420px">1</div><div class="t cn" style="left:504px">2</div><div class="t cn" style="left:588px">3</div><div class="t cn" style="left:672px">4</div><div class="t cn" style="left:756px">5</div><div class="t cn" style="left:840px">6</div><div class="t cn" style="left:924px">7</div><div class="t cn" style="left:1008px">8</div><div class="t cn" style="left:1092px">9</div><div class="t cn" style="left:1176px">10</div><div class="t cn" style="left:1260px">11</div><div class="t cn" style="left:1344px">12</div>

<!-- sidebar items -->
<div class="t n" style="top:147px">1</div>
<div class="t h" style="top:146px">OVER BLACK</div>
<svg class="i" style="left:291px;top:146px;width:16px;height:16px;color:#8f8a80;stroke-width:1.6"><use href="#ic-circle"/></svg>
<div class="t d" style="top:167.500px">A hidden spot in a high<br>building. Alex has heartbeat<br>slow, trained, mechanical, we<br>can hear it. The heartbeat of<br>a man built to kill.</div>

<div class="b" style="left:64px;top:255px;width:255px;height:142px;background:#c09f45;border:1px solid #cfb05a;border-radius:6px"></div>
<div class="t n" style="top:264px;color:#fff">2</div>
<div class="t h" style="top:263px;color:#fff">INT GRAND BOHEMIA H...</div>
<svg class="i" style="left:291px;top:263px;width:16px;height:16px;color:#f2e7c8;stroke-width:1.6"><use href="#ic-check"/></svg>
<div class="t d" style="top:284.500px;color:#f3ead0">Prague. Night. A luxury hotel<br>gala. ALEX (25) moves<br>through the crowd in a<br>tailored suit, invisible among<br>the wealthy. Earpiece in. Eyes<br>mapping the room. He's here<br>to work.</div>

<div class="t n" style="top:411px">3</div>
<div class="t h" style="top:410px">EXT DOWNTOWN OFFI...</div>
<svg class="i" style="left:291px;top:410px;width:16px;height:16px;color:#9c3a30;stroke-width:1.6"><use href="#ic-check"/></svg>
<div class="t d" style="top:431.500px">His team checks in through<br>the earpiece. The target is<br>confirmed. Alex positions<br>himself. This is routine.</div>

<div class="t n" style="top:513px">4</div>
<div class="t h" style="top:512px">INT CROWDED RESTAU...</div>
<svg class="i" style="left:291px;top:512px;width:16px;height:16px;color:#9c3a30;stroke-width:1.6"><use href="#ic-check"/></svg>
<div class="t d" style="top:533.500px">Alex looks up. Across the<br>room, a man is staring at him.<br>THOMAS (25). Same face.<br>Same body. Same eyes. The<br>room goes silent — not<br>literally, but for Alex the<br>sound drains away. Three<br>seconds of eye contact that<br>will destroy both their lives.</div>

<div class="t n" style="top:690px">5</div>
<svg class="i" style="left:291px;top:689px;width:16px;height:16px;color:#8f8a80;stroke-width:1.6"><use href="#ic-circle"/></svg>
<div class="t d" style="top:694.500px">Thomas is standing next to<br>GRACE (50, blonde, striking).<br>Thomas looks confused,<br>disturbed. He takes a step<br>toward Alex. Grace pulls him<br>back, sensing something<br>wrong.</div>

<div class="t n" style="top:821px">6</div>
<svg class="i" style="left:291px;top:820px;width:16px;height:16px;color:#8f8a80;stroke-width:1.6"><use href="#ic-circle"/></svg>
<div class="t d" style="top:825.500px">Someone on Alex's team<br>notices. A voice through the<br>earpiece: CHRIS (60). A code<br>word. Two syllables.</div>

<div class="t n" style="top:907px">7</div>
<svg class="i" style="left:291px;top:906px;width:16px;height:16px;color:#8f8a80;stroke-width:1.6"><use href="#ic-circle"/></svg>
<div class="t d" style="top:911.500px">An operative moves through<br>the crowd. Thomas is<br>neutralized — fast, invisible,<br>clinical. He collapses into<br>Grace's arms. Grace screams.<br>The room erupts in panic.</div>

<div class="t n" style="top:1023px">8</div>
<svg class="i" style="left:291px;top:1022px;width:16px;height:16px;color:#8f8a80;stroke-width:1.6"><use href="#ic-circle"/></svg>
<div class="t d" style="top:1027.500px">Simultaneously, Alex's own<br>team turns on him. The same<br>men he's worked with for<br>years are now pointing</div>

<!-- card columns -->
<div class="b" style="left:360px;top:467px;width:503px;height:620px;background:#1a1a1a;border-left:4px solid #c09f45;border-right:1px solid #2a2a28"></div>
<div class="b" style="left:887px;top:467px;width:502px;height:620px;background:#1a1a1a;border-left:4px solid #c09f45;border-right:1px solid #2a2a28"></div>
<div class="b" style="left:1413px;top:467px;width:504px;height:620px;background:#1a1a1a;border-left:4px solid #c09f45;border-right:1px solid #2a2a28"></div>

<!-- column 1 -->
<div class="t de" style="left:384px;top:473.500px">Sweeping wide shot of the opulent ballroom interior revealing crystal<br>chandeliers, marble floors, designer gowns, and Prague's elite<br>mingling</div>
<div class="t ac" style="left:384px;top:548px"><b>Action:</b> Camera slowly pushes forward through the glittering crowd as string<br>quartet plays</div>
<div class="b chip" style="left:384px;top:602px;width:274px"></div>
<svg class="p" style="left:388px;top:606px;border-radius:4px" width="28" height="28" viewBox="180 5 170 170" preserveAspectRatio="xMidYMid slice"><use href="#sA" width="457" height="255"/></svg>
<div class="t ct" style="left:422px;top:612px">GRAND BOHEMIA HOTEL - BALLROOM</div>
<div class="b chip" style="left:667px;top:602px;width:94px"></div>
<div class="b" style="left:670px;top:606px;width:28px;height:28px;border-radius:50%;background:#222"></div>
<svg class="i" style="left:677px;top:613px;width:14px;height:14px;color:#55524c"><use href="#ic-user"/></svg>
<div class="t ct" style="left:704px;top:612px">CROWD</div>
<svg class="i" style="left:383px;top:650px;width:17px;height:17px;color:#4d4b47;stroke-width:1.5"><use href="#ic-mood"/></svg>
<div class="t m" style="left:403px;top:654px">luxurious</div>
<svg class="i" style="left:467px;top:650px;width:15px;height:15px;color:#4d4b47;stroke-width:1.6"><use href="#ic-clock"/></svg>
<div class="t m" style="left:486px;top:654px">4s</div>
<div class="b hr" style="left:384px;top:687px;width:457px"></div>
<svg class="i" style="left:383px;top:707px;width:17px;height:17px;color:#dcd9d2;stroke-width:1.6"><use href="#ic-image"/></svg>
<div class="t lb" style="left:408px;top:707px">Image:</div>
<div class="b bg" style="left:462px;top:704px;width:33px;height:22px">1 / 1</div>
<svg class="p ph" style="left:385px;top:739px;border-radius:5px" width="456" height="255" viewBox="0 0 457 255" preserveAspectRatio="xMidYMid slice"><use href="#sA" width="457" height="255"/></svg>
<div class="b up" style="left:385px;top:1013px;width:143px"></div>
<svg class="i" style="left:400px;top:1025px;width:16px;height:16px;color:#8c877d;stroke-width:1.7"><use href="#ic-upload"/></svg>
<div class="t ut" style="left:424px;top:1024px">Upload Image</div>
<div class="b hr" style="left:384px;top:1069px;width:457px"></div>

<!-- column 2 -->
<div class="t de" style="left:911px;top:473.500px">Alex enters through gilded doors, his midnight-blue suit immaculate,<br>transitioning from the previous scene's tension</div>
<div class="t ac" style="left:911px;top:526.500px"><b>Action:</b> Alex steps into frame, immediately alert and scanning</div>
<div class="b chip" style="left:911px;top:562px;width:274px"></div>
<svg class="p" style="left:915px;top:566px;border-radius:4px" width="28" height="28" viewBox="180 5 170 170" preserveAspectRatio="xMidYMid slice"><use href="#sA" width="457" height="255"/></svg>
<div class="t ct" style="left:949px;top:572px">GRAND BOHEMIA HOTEL - BALLROOM</div>
<div class="b chip" style="left:1193px;top:562px;width:79px"></div>
<svg class="p" style="left:1197px;top:566px;border-radius:50%" width="28" height="28" viewBox="0 0 28 28"><use href="#sAlex" width="28" height="28"/></svg>
<div class="t ct" style="left:1231px;top:572px">ALEX</div>
<svg class="i" style="left:911px;top:610px;width:17px;height:17px;color:#4d4b47;stroke-width:1.5"><use href="#ic-mood"/></svg>
<div class="t m" style="left:930px;top:613px">controlled</div>
<svg class="i" style="left:1000px;top:610px;width:15px;height:15px;color:#4d4b47;stroke-width:1.6"><use href="#ic-clock"/></svg>
<div class="t m" style="left:1019px;top:613px">3s</div>
<div class="b hr" style="left:911px;top:647px;width:456px"></div>
<svg class="i" style="left:910px;top:667px;width:17px;height:17px;color:#dcd9d2;stroke-width:1.6"><use href="#ic-image"/></svg>
<div class="t lb" style="left:935px;top:667px">Image:</div>
<div class="b bg" style="left:989px;top:664px;width:32px;height:22px">1 / 1</div>
<svg class="p ph" style="left:912px;top:698px;border-radius:5px" width="456" height="256" viewBox="0 0 455 256" preserveAspectRatio="xMidYMid slice"><use href="#sB" width="455" height="256"/></svg>
<div class="b up" style="left:912px;top:973px;width:144px"></div>
<svg class="i" style="left:927px;top:985px;width:16px;height:16px;color:#8c877d;stroke-width:1.7"><use href="#ic-upload"/></svg>
<div class="t ut" style="left:951px;top:984px">Upload Image</div>
<div class="b hr" style="left:911px;top:1029px;width:456px"></div>
<svg class="i" style="left:910px;top:1047px;width:17px;height:17px;color:#dcd9d2;stroke-width:1.6"><use href="#ic-note"/></svg>
<div class="t lb" style="left:935px;top:1047px">Prompt:</div>
<div class="b bg" style="left:998px;top:1047px;width:24px;height:18px;line-height:18px">V1</div>
<svg class="i" style="left:1352px;top:1048px;width:15px;height:15px;color:#55524c"><use href="#ic-up"/></svg>
<div class="b" style="left:912px;top:1077px;width:456px;height:12px;background:#161616;border-radius:5px 5px 0 0"></div>

<!-- column 3 -->
<div class="t de" style="left:1437px;top:473.500px">Alex's face as his eyes move systematically across the room,<br>calculating and cataloguing</div>
<div class="t ac" style="left:1437px;top:526.500px"><b>Action:</b> Eyes dart from face to face, exit to exit, camera to camera</div>
<div class="b chip" style="left:1437px;top:562px;width:274px"></div>
<svg class="p" style="left:1441px;top:566px;border-radius:4px" width="28" height="28" viewBox="180 5 170 170" preserveAspectRatio="xMidYMid slice"><use href="#sA" width="457" height="255"/></svg>
<div class="t ct" style="left:1475px;top:572px">GRAND BOHEMIA HOTEL - BALLROOM</div>
<div class="b chip" style="left:1720px;top:562px;width:79px"></div>
<svg class="p" style="left:1724px;top:566px;border-radius:50%" width="28" height="28" viewBox="0 0 28 28"><use href="#sAlex" width="28" height="28"/></svg>
<div class="t ct" style="left:1758px;top:572px">ALEX</div>
<svg class="i" style="left:1437px;top:610px;width:17px;height:17px;color:#4d4b47;stroke-width:1.5"><use href="#ic-mood"/></svg>
<div class="t m" style="left:1457px;top:613px">focused</div>
<svg class="i" style="left:1515px;top:610px;width:15px;height:15px;color:#4d4b47;stroke-width:1.6"><use href="#ic-clock"/></svg>
<div class="t m" style="left:1535px;top:613px">2s</div>
<div class="b hr" style="left:1437px;top:646px;width:458px"></div>
<svg class="i" style="left:1436px;top:666px;width:17px;height:17px;color:#dcd9d2;stroke-width:1.6"><use href="#ic-image"/></svg>
<div class="t lb" style="left:1461px;top:666px">Image:</div>
<div class="b" style="left:1516px;top:664px;width:58px;height:22px;border:1px solid #2a2a28;border-radius:4px;background:#1c1c1c;color:#b0aca2;font-size:12px;line-height:20px;padding-left:7px">1 / 2</div>
<svg class="i" style="left:1553px;top:669px;width:12px;height:12px;color:#8f8a80"><use href="#ic-down"/></svg>
<svg class="p ph" style="left:1437px;top:698px;border-radius:5px" width="458" height="255" viewBox="0 0 457 255" preserveAspectRatio="xMidYMid slice"><use href="#sC" width="457" height="255"/></svg>
<div class="b up" style="left:1437px;top:972px;width:146px"></div>
<svg class="i" style="left:1453px;top:984px;width:16px;height:16px;color:#8c877d;stroke-width:1.7"><use href="#ic-upload"/></svg>
<div class="t ut" style="left:1477px;top:983px">Upload Image</div>
<div class="b hr" style="left:1437px;top:1028px;width:458px"></div>
<svg class="i" style="left:1436px;top:1046px;width:17px;height:17px;color:#dcd9d2;stroke-width:1.6"><use href="#ic-note"/></svg>
<div class="t lb" style="left:1461px;top:1046px">Prompt:</div>
<div class="b bg" style="left:1522px;top:1046px;width:26px;height:18px;line-height:18px">V1</div>
<svg class="i" style="left:1880px;top:1047px;width:15px;height:15px;color:#55524c"><use href="#ic-up"/></svg>
<div class="b" style="left:1437px;top:1076px;width:458px;height:13px;background:#161616;border-radius:5px 5px 0 0"></div>

<!-- scrollbar and chat -->
<div class="b" style="left:1940px;top:467px;width:8px;height:620px;background:#141414"></div>
<div class="b" style="left:1940px;top:485px;width:8px;height:159px;background:#2e2b22;border-radius:4px"></div>
<div class="b" style="left:1948px;top:542px;width:28px;height:74px;background:#181818"></div>
<svg class="i" style="left:1955px;top:553px;width:16px;height:16px;color:#8a857b;stroke-width:1.7"><use href="#ic-msg"/></svg>
<div class="t" style="left:1962px;top:574px;font-size:11.5px;font-weight:700;line-height:14px;color:#8a857b;letter-spacing:1px;transform-origin:0 0;transform:translateX(7px) rotate(90deg)">Chat</div>

</div></div>
</body></html>
